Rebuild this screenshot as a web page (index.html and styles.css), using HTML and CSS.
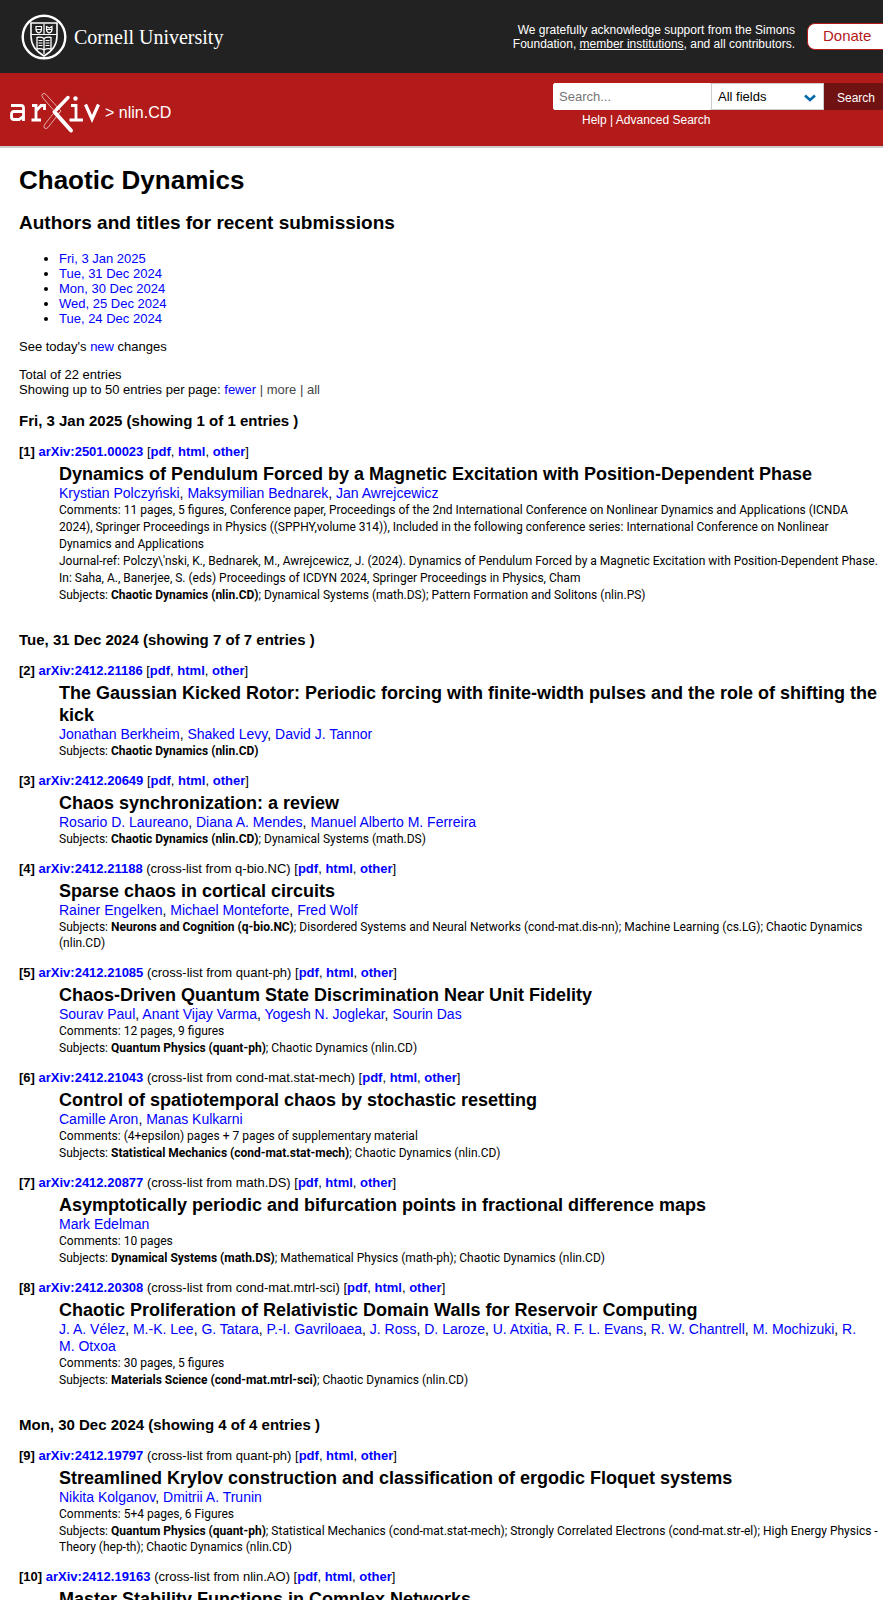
FILE: index.html
```html
<!DOCTYPE html>
<html lang="en">
<head>
<meta charset="utf-8">
<title>Chaotic Dynamics</title>
<link rel="stylesheet" href="styles.css">
</head>
<body>
<header>
  <div class="cornell-bar">
    <a class="cornell" href="#" aria-label="Cornell University">
      <svg class="seal" viewBox="0 0 46 46" fill="none" stroke="#fff" aria-hidden="true">
        <circle cx="23" cy="23" r="21.3" stroke-width="2.400"/>
        <path d="M10 9H36V22C36 32 30 38 23 42C16 38 10 32 10 22Z" stroke-width="1.6"/>
        <path d="M10 20.500H36M23 10V20" stroke-width="1.2"/>
        <path d="M15 12.500H20.500V15.500Q20.500 18 17.750 19Q15 18 15 15.500ZM25.500 12.500L28.300 14L31 12.500V15.500Q31 18 28.300 19Q25.500 18 25.500 15.500ZM15 15.500H20.500M25.500 15.500H31" stroke-width="1.2"/>
        <path d="M16 23.500Q20 22.500 23 24.500Q26 22.500 30 23.500V35Q26 34 23 36Q20 34 16 35ZM23 24V40" stroke-width="1.300"/>
        <path d="M17.500 26.500H21.500M17.500 29H21.500M17.500 31.500H21.500M24.500 26.500H28.500M24.500 29H28.500M24.500 31.500H28.500" stroke-width="1.200"/>
      </svg>
      <span class="cornell-name">Cornell University</span>
    </a>
    <div class="support">We gratefully acknowledge support from the Simons Foundation, <a href="#">member institutions</a>, and all contributors.</div>
    <a class="donate" href="#">Donate</a>
  </div>
  <div class="arxiv-bar">
    <div class="crumbs">
      <a href="#" aria-label="arXiv">
        <svg class="arxiv-logo" viewBox="0 0 90 42" fill="none" stroke="#fff" aria-hidden="true">
          <path d="M1 13.500H11Q13.500 13.500 13.500 16V29M13.500 19.500H4Q1.500 19.500 1.500 22V25Q1.500 27.500 4 27.500H9L13.500 24.500" stroke-width="2.800"/>
          <path d="M22 13.500H26V28M21.500 28H31M26 19L31 13.500H34.500V18" stroke-width="2.800"/>
          <path d="M32.500 2Q31 3.500 33 6L47 22Q50 21 51 19L36 2.500Q34 0.500 32.500 2ZM50 20L38 35.500Q36 37.500 34.500 36Q33 34.500 35 32L43 22" stroke-width="0.900" opacity="0.700"/>
          <path d="M58 5.500L46 18" stroke-width="3.400" stroke-linecap="round"/>
          <path d="M44.500 20L61 38.500" stroke-width="4" stroke-linecap="round"/>
          <path d="M61 13.500H66V28M59.500 28H73" stroke-width="2.800"/>
          <circle cx="65.500" cy="6.500" r="2.200" fill="#fff" stroke="none"/>
          <path d="M75.500 12.500L82 27L88.500 12.500" stroke-width="3.200"/>
        </svg>
      </a>
      <span>&gt; <a href="#">nlin.CD</a></span>
    </div>
    <form class="search">
      <div class="controls">
        <input type="text" placeholder="Search..." aria-label="Search term">
        <div class="select-wrap">
          <select aria-label="Field to search"><option>All fields</option></select>
          <svg viewBox="0 0 12 8" fill="none" stroke="#0068ac" stroke-width="2.600" aria-hidden="true"><path d="M1 1.500L6 6L11 1.500"/></svg>
        </div>
        <button type="button">Search</button>
      </div>
      <p class="help"><a href="#">Help</a> | <a href="#">Advanced Search</a></p>
    </form>
  </div>
</header>
<main>
  <h1>Chaotic Dynamics</h1>
  <h2>Authors and titles for recent submissions</h2>
  <ul>
    <li><a href="#">Fri, 3 Jan 2025</a></li>
    <li><a href="#">Tue, 31 Dec 2024</a></li>
    <li><a href="#">Mon, 30 Dec 2024</a></li>
    <li><a href="#">Wed, 25 Dec 2024</a></li>
    <li><a href="#">Tue, 24 Dec 2024</a></li>
  </ul>
  <p>See today's <a href="#">new</a> changes</p>
  <div class="paging">Total of 22 entries<br>Showing up to 50 entries per page: <a href="#">fewer</a> <span>| more | all</span></div>

  <h3>Fri, 3 Jan 2025 (showing 1 of 1 entries )</h3>
  <dl>
    <dt><b>[1]</b> <a href="#">arXiv:2501.00023</a> [<a href="#">pdf</a>, <a href="#">html</a>, <a href="#">other</a>]</dt>
    <dd>
      <div class="title">Dynamics of Pendulum Forced by a Magnetic Excitation with Position-Dependent Phase</div>
      <div class="authors"><a href="#">Krystian Polczyński</a>, <a href="#">Maksymilian Bednarek</a>, <a href="#">Jan Awrejcewicz</a></div>
      <div class="comments">Comments: 11 pages, 5 figures, Conference paper, Proceedings of the 2nd International Conference on Nonlinear Dynamics and Applications (ICNDA 2024), Springer Proceedings in Physics ((SPPHY,volume 314)), Included in the following conference series: International Conference on Nonlinear Dynamics and Applications</div>
      <div class="comments">Journal-ref: Polczy\'nski, K., Bednarek, M., Awrejcewicz, J. (2024). Dynamics of Pendulum Forced by a Magnetic Excitation with Position-Dependent Phase. In: Saha, A., Banerjee, S. (eds) Proceedings of ICDYN 2024, Springer Proceedings in Physics, Cham</div>
      <div class="subjects">Subjects: <b>Chaotic Dynamics (nlin.CD)</b>; Dynamical Systems (math.DS); Pattern Formation and Solitons (nlin.PS)</div>
    </dd>
  </dl>

  <h3>Tue, 31 Dec 2024 (showing 7 of 7 entries )</h3>
  <dl>
    <dt><b>[2]</b> <a href="#">arXiv:2412.21186</a> [<a href="#">pdf</a>, <a href="#">html</a>, <a href="#">other</a>]</dt>
    <dd>
      <div class="title">The Gaussian Kicked Rotor: Periodic forcing with finite-width pulses and the role of shifting the kick</div>
      <div class="authors"><a href="#">Jonathan Berkheim</a>, <a href="#">Shaked Levy</a>, <a href="#">David J. Tannor</a></div>
      <div class="subjects">Subjects: <b>Chaotic Dynamics (nlin.CD)</b></div>
    </dd>
    <dt><b>[3]</b> <a href="#">arXiv:2412.20649</a> [<a href="#">pdf</a>, <a href="#">html</a>, <a href="#">other</a>]</dt>
    <dd>
      <div class="title">Chaos synchronization: a review</div>
      <div class="authors"><a href="#">Rosario D. Laureano</a>, <a href="#">Diana A. Mendes</a>, <a href="#">Manuel Alberto M. Ferreira</a></div>
      <div class="subjects">Subjects: <b>Chaotic Dynamics (nlin.CD)</b>; Dynamical Systems (math.DS)</div>
    </dd>
    <dt><b>[4]</b> <a href="#">arXiv:2412.21188</a> (cross-list from q-bio.NC) [<a href="#">pdf</a>, <a href="#">html</a>, <a href="#">other</a>]</dt>
    <dd>
      <div class="title">Sparse chaos in cortical circuits</div>
      <div class="authors"><a href="#">Rainer Engelken</a>, <a href="#">Michael Monteforte</a>, <a href="#">Fred Wolf</a></div>
      <div class="subjects">Subjects: <b>Neurons and Cognition (q-bio.NC)</b>; Disordered Systems and Neural Networks (cond-mat.dis-nn); Machine Learning (cs.LG); Chaotic Dynamics (nlin.CD)</div>
    </dd>
    <dt><b>[5]</b> <a href="#">arXiv:2412.21085</a> (cross-list from quant-ph) [<a href="#">pdf</a>, <a href="#">html</a>, <a href="#">other</a>]</dt>
    <dd>
      <div class="title">Chaos-Driven Quantum State Discrimination Near Unit Fidelity</div>
      <div class="authors"><a href="#">Sourav Paul</a>, <a href="#">Anant Vijay Varma</a>, <a href="#">Yogesh N. Joglekar</a>, <a href="#">Sourin Das</a></div>
      <div class="comments">Comments: 12 pages, 9 figures</div>
      <div class="subjects">Subjects: <b>Quantum Physics (quant-ph)</b>; Chaotic Dynamics (nlin.CD)</div>
    </dd>
    <dt><b>[6]</b> <a href="#">arXiv:2412.21043</a> (cross-list from cond-mat.stat-mech) [<a href="#">pdf</a>, <a href="#">html</a>, <a href="#">other</a>]</dt>
    <dd>
      <div class="title">Control of spatiotemporal chaos by stochastic resetting</div>
      <div class="authors"><a href="#">Camille Aron</a>, <a href="#">Manas Kulkarni</a></div>
      <div class="comments">Comments: (4+epsilon) pages + 7 pages of supplementary material</div>
      <div class="subjects">Subjects: <b>Statistical Mechanics (cond-mat.stat-mech)</b>; Chaotic Dynamics (nlin.CD)</div>
    </dd>
    <dt><b>[7]</b> <a href="#">arXiv:2412.20877</a> (cross-list from math.DS) [<a href="#">pdf</a>, <a href="#">html</a>, <a href="#">other</a>]</dt>
    <dd>
      <div class="title">Asymptotically periodic and bifurcation points in fractional difference maps</div>
      <div class="authors"><a href="#">Mark Edelman</a></div>
      <div class="comments">Comments: 10 pages</div>
      <div class="subjects">Subjects: <b>Dynamical Systems (math.DS)</b>; Mathematical Physics (math-ph); Chaotic Dynamics (nlin.CD)</div>
    </dd>
    <dt><b>[8]</b> <a href="#">arXiv:2412.20308</a> (cross-list from cond-mat.mtrl-sci) [<a href="#">pdf</a>, <a href="#">html</a>, <a href="#">other</a>]</dt>
    <dd>
      <div class="title">Chaotic Proliferation of Relativistic Domain Walls for Reservoir Computing</div>
      <div class="authors"><a href="#">J. A. Vélez</a>, <a href="#">M.-K. Lee</a>, <a href="#">G. Tatara</a>, <a href="#">P.-I. Gavriloaea</a>, <a href="#">J. Ross</a>, <a href="#">D. Laroze</a>, <a href="#">U. Atxitia</a>, <a href="#">R. F. L. Evans</a>, <a href="#">R. W. Chantrell</a>, <a href="#">M. Mochizuki</a>, <a href="#">R. M.&nbsp;Otxoa</a></div>
      <div class="comments">Comments: 30 pages, 5 figures</div>
      <div class="subjects">Subjects: <b>Materials Science (cond-mat.mtrl-sci)</b>; Chaotic Dynamics (nlin.CD)</div>
    </dd>
  </dl>

  <h3>Mon, 30 Dec 2024 (showing 4 of 4 entries )</h3>
  <dl>
    <dt><b>[9]</b> <a href="#">arXiv:2412.19797</a> (cross-list from quant-ph) [<a href="#">pdf</a>, <a href="#">html</a>, <a href="#">other</a>]</dt>
    <dd>
      <div class="title">Streamlined Krylov construction and classification of ergodic Floquet systems</div>
      <div class="authors"><a href="#">Nikita Kolganov</a>, <a href="#">Dmitrii A. Trunin</a></div>
      <div class="comments">Comments: 5+4 pages, 6 Figures</div>
      <div class="subjects">Subjects: <b>Quantum Physics (quant-ph)</b>; Statistical Mechanics (cond-mat.stat-mech); Strongly Correlated Electrons (cond-mat.str-el); High Energy Physics - Theory (hep-th); Chaotic Dynamics (nlin.CD)</div>
    </dd>
    <dt><b>[10]</b> <a href="#">arXiv:2412.19163</a> (cross-list from nlin.AO) [<a href="#">pdf</a>, <a href="#">html</a>, <a href="#">other</a>]</dt>
    <dd>
      <div class="title">Master Stability Functions in Complex Networks</div>
    </dd>
  </dl>
</main>
</body>
</html>
```
FILE: styles.css
```css
html { overflow-x: hidden; }
body {
  margin: 0;
  font: 13px/15px "Liberation Sans", Arial, sans-serif;
  color: #000;
  background: #fff;
  height: 100vh;
  overflow: hidden;
}
a { color: #00f; text-decoration: none; }

.cornell-bar {
  display: flex;
  align-items: center;
  height: 73px;
  background: #222;
  color: #fff;
}
.cornell { display: flex; align-items: center; gap: 7px; margin-left: 21px; color: #fff; }
.seal { width: 46px; height: 46px; }
.cornell-name { font: 20px/28px "Liberation Serif", "Times New Roman", serif; }
.support {
  width: 300px;
  margin-left: auto;
  text-align: right;
  font-size: 12px;
  line-height: 14px;
}
.support a { color: #fff; text-decoration: underline; }
.donate {
  box-sizing: border-box;
  width: 90px;
  height: 27px;
  margin: 0 -14px 0 12px;
  padding-left: 15px;
  border: 1px solid #b31b1b;
  border-radius: 8px;
  background: #fff;
  color: #b31b1b;
  font-size: 15px;
  line-height: 24px;
}

.arxiv-bar {
  display: flex;
  justify-content: space-between;
  height: 73px;
  border-bottom: 2px solid #ccc;
  background: #b31b1b;
  color: #fff;
}
.arxiv-bar a { color: #fff; }
.crumbs { display: flex; align-items: center; gap: 5px; margin: 7px 0 0 10px; font-size: 16px; line-height: 20px; }
.arxiv-logo { display: block; width: 90px; height: 42px; }
.search { margin-top: 10px; }
.controls { display: flex; height: 27px; }
.controls input {
  box-sizing: border-box;
  width: 158px;
  border: 1px solid #fff;
  border-radius: 2px 0 0 2px;
  padding: 0 5px;
  font: 13px "Liberation Sans", Arial, sans-serif;
}
.controls input::placeholder { color: #757575; }
.select-wrap { position: relative; width: 113px; }
.select-wrap select {
  appearance: none;
  width: 100%;
  height: 100%;
  border: 1px solid #ccc;
  border-radius: 0;
  padding: 0 6px;
  background: #fff;
  color: #000;
  font: 13px "Liberation Sans", Arial, sans-serif;
}
.select-wrap svg { position: absolute; right: 8px; top: 11px; width: 12px; height: 8px; pointer-events: none; }
.controls button {
  width: 59px;
  border: 0;
  padding: 2px 0 0 5px;
  background: #701112;
  color: #fff;
  font: 12px "Liberation Sans", Arial, sans-serif;
}
.help { margin: 3px 0 0 29px; font-size: 12px; }

main { padding: 17px 4px 0 19px; }
h1 { margin: 0 0 16px; font-size: 26px; line-height: 30px; }
h2 { margin: 0 0 16px; font-size: 19px; line-height: 24px; }
ul { margin: 0 0 13px; padding-left: 40px; }
p { margin: 0 0 13px; }
.paging { margin-bottom: 15px; }
.paging span { color: #454545; }
h3 { margin: 0 0 14px; font-size: 15px; line-height: 18px; }
dl { margin: 0 0 28px; }
dt a { font-weight: bold; }
dd { margin: 0 0 14px 40px; }
.title { padding-top: 4px; font-size: 18px; line-height: 22px; font-weight: bold; }
.authors { font-size: 14px; line-height: 17px; }
.comments, .subjects { font: 12px/17px Roboto, "Liberation Sans", Arial, sans-serif; }
.subjects { line-height: 16px; }
```
